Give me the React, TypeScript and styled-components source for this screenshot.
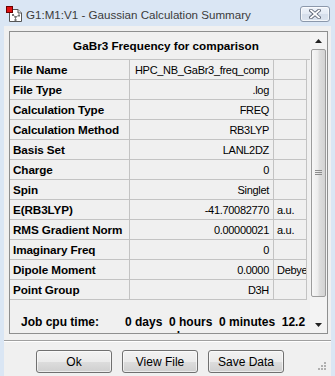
import React from "react";
import styled, { createGlobalStyle } from "styled-components";

const Global = createGlobalStyle`
  html, body { margin: 0; padding: 0; }
  body { width: 335px; height: 376px; overflow: hidden; background: #dae6f4; }
`;

const Window = styled.div`
  position: relative;
  width: 335px;
  height: 376px;
  background: #dae6f4;
  display: flex;
  flex-direction: column;
  overflow: hidden;
  font-family: "Liberation Sans", Arial, sans-serif;
  color: #000;
`;

const TitleBar = styled.div`
  height: 26px;
  flex: none;
  display: flex;
  align-items: flex-start;
  padding: 6px 5px 0 6px;
  box-sizing: border-box;
`;

const TitleText = styled.div`
  margin-left: 4px;
  margin-top: 1px;
  font-size: 11.6px;
  line-height: 15px;
  color: #3b3b3b;
  flex: 1;
  white-space: nowrap;
`;

const CloseButton = styled.div`
  width: 30px;
  height: 16px;
  box-sizing: border-box;
  border: 1px solid #8b98ab;
  border-radius: 3px;
  background: linear-gradient(#eef3fa 0%, #e3eaf4 50%, #d5deeb 51%, #dce4ef 100%);
  box-shadow: inset 0 0 0 1px rgba(255, 255, 255, 0.7);
  display: flex;
  align-items: center;
  justify-content: center;
`;

const Client = styled.div`
  position: relative;
  flex: 1;
  margin: 0 4px;
  background: #f0f0f0;
  display: flex;
  flex-direction: column;
`;

const Panel = styled.div`
  margin: 5px 3px 0 5px;
  height: 303px;
  box-sizing: border-box;
  border: 1px solid #8e8f8f;
  display: flex;
  overflow: hidden;
`;

const Content = styled.div`
  flex: 1;
  display: flex;
  flex-direction: column;
  overflow: hidden;
`;

const Header = styled.div`
  height: 27px;
  flex: none;
  width: 300px;
  border-bottom: 1px solid #c3c3c3;
  display: flex;
  align-items: center;
  justify-content: center;
  font-weight: bold;
  font-size: 11.7px;
  padding-left: 6px;
  box-sizing: content-box;
`;

const Row = styled.div`
  display: grid;
  grid-template-columns: 120px 144px 33px;
  height: 20px;
  flex: none;
`;

const Cell = styled.div<{ $kind: "label" | "value" | "unit" }>`
  height: 19px;
  border-right: 1px solid #c3c3c3;
  border-bottom: 1px solid #c3c3c3;
  display: flex;
  align-items: center;
  white-space: nowrap;
  overflow: hidden;
  ${(p) =>
    p.$kind === "label"
      ? `font-weight: bold; font-size: 11.7px; padding-left: 3px; letter-spacing: -0.1px;`
      : p.$kind === "value"
      ? `font-size: 11px; justify-content: flex-end; padding-right: 4px; letter-spacing: -0.3px;`
      : `font-size: 11px; padding-left: 3px; letter-spacing: -0.3px;`}
`;

const JobRow = styled.div`
  display: flex;
  padding: 15px 0 0 11px;
  font-weight: bold;
  font-size: 12px;
  line-height: 14px;
`;

const JobLabel = styled.div`
  width: 104px;
  flex: none;
`;

const JobValue = styled.div`
  width: 180px;
  white-space: pre-wrap;
  padding-left: 13px;
  text-indent: -13px;
`;

const ScrollBar = styled.div`
  width: 17px;
  flex: none;
  background: #f3f3f3;
  display: flex;
  flex-direction: column;
  align-items: center;
`;

const ArrowBox = styled.div`
  height: 17px;
  width: 17px;
  flex: none;
  display: flex;
  align-items: center;
  justify-content: center;
`;

const Thumb = styled.div`
  width: 15px;
  height: 248px;
  flex: none;
  box-sizing: border-box;
  border: 1px solid #9c9c9c;
  border-radius: 2px;
  background: linear-gradient(90deg, #f7f7f7 0%, #ececec 45%, #dedede 55%, #d3d3d3 100%);
  display: flex;
  align-items: center;
  justify-content: center;
`;

const Separator = styled.div`
  margin-top: 6px;
  height: 0;
  border-top: 1px solid #a0a0a0;
  border-bottom: 1px solid #ffffff;
`;

const ButtonRow = styled.div`
  display: flex;
  gap: 10px;
  padding: 8px 0 0 32px;
`;

const Button = styled.div`
  width: 76px;
  height: 23px;
  box-sizing: border-box;
  border: 1px solid #707070;
  border-radius: 3px;
  background: linear-gradient(#f2f2f2 0%, #ebebeb 50%, #dddddd 51%, #cfcfcf 100%);
  box-shadow: inset 0 0 0 1px rgba(255, 255, 255, 0.6);
  display: flex;
  align-items: center;
  justify-content: center;
  font-size: 12px;
  color: #000;
`;

const Grip = styled.svg`
  position: absolute;
  right: 5px;
  bottom: 6px;
`;

const rows: [string, string, string][] = [
  ["File Name", "HPC_NB_GaBr3_freq_comp", ""],
  ["File Type", ".log", ""],
  ["Calculation Type", "FREQ", ""],
  ["Calculation Method", "RB3LYP", ""],
  ["Basis Set", "LANL2DZ", ""],
  ["Charge", "0", ""],
  ["Spin", "Singlet", ""],
  ["E(RB3LYP)", "-41.70082770", "a.u."],
  ["RMS Gradient Norm", "0.00000021", "a.u."],
  ["Imaginary Freq", "0", ""],
  ["Dipole Moment", "0.0000", "Debye"],
  ["Point Group", "D3H", ""],
];

const AppIcon = () => (
  <svg width="16" height="16" viewBox="0 0 16 16">
    <path d="M3.5 3.5 H12 L15.5 7 V15.5 H3.5 Z" fill="#fff" stroke="#555" />
    <path d="M12 3.5 V7 H15.5" fill="#e8e8e8" stroke="#555" />
    <g stroke="#8a8a8a" strokeWidth="1">
      <line x1="7" y1="9" x2="9.5" y2="11" />
      <line x1="9.5" y1="11" x2="12.5" y2="9.5" />
      <line x1="9.5" y1="11" x2="9.5" y2="14" />
    </g>
    <g fill="#777">
      <rect x="6" y="8" width="2" height="2" />
      <rect x="8.5" y="10" width="2" height="2" />
      <rect x="12" y="8.5" width="2" height="2" />
      <rect x="8.5" y="13" width="2" height="2" />
    </g>
    <rect x="0.5" y="0.5" width="6" height="6" fill="#e01010" stroke="#6a0000" />
  </svg>
);

const CloseGlyph = () => (
  <svg width="12" height="10" viewBox="0 0 12 10">
    <path d="M2 1.5 L10 8.5 M10 1.5 L2 8.5" stroke="#5e6675" strokeWidth="3.6" strokeLinecap="square" />
    <path d="M2 1.5 L10 8.5 M10 1.5 L2 8.5" stroke="#ffffff" strokeWidth="1.8" strokeLinecap="square" />
  </svg>
);

export default function App() {
  return (
    <>
      <Global />
      <Window>
        <TitleBar>
          <AppIcon />
          <TitleText>G1:M1:V1 - Gaussian Calculation Summary</TitleText>
          <CloseButton>
            <CloseGlyph />
          </CloseButton>
        </TitleBar>
        <Client>
          <Panel>
            <Content>
              <Header>GaBr3 Frequency for comparison</Header>
              {rows.map(([label, value, unit]) => (
                <Row key={label}>
                  <Cell $kind="label">{label}</Cell>
                  <Cell $kind="value">{value}</Cell>
                  <Cell $kind="unit">{unit}</Cell>
                </Row>
              ))}
              <JobRow>
                <JobLabel>Job cpu time:</JobLabel>
                <JobValue>{"0 days  0 hours  0 minutes  12.2 seconds"}</JobValue>
              </JobRow>
            </Content>
            <ScrollBar>
              <ArrowBox>
                <svg width="7" height="4" viewBox="0 0 7 4">
                  <path d="M3.5 0 L7 4 H0 Z" fill="#222" />
                </svg>
              </ArrowBox>
              <Thumb>
                <svg width="7" height="6" viewBox="0 0 7 6">
                  <g stroke="#8d8d8d">
                    <line x1="0" y1="0.5" x2="7" y2="0.5" />
                    <line x1="0" y1="2.5" x2="7" y2="2.5" />
                    <line x1="0" y1="4.5" x2="7" y2="4.5" />
                  </g>
                </svg>
              </Thumb>
              <div style={{ flex: 1 }} />
              <ArrowBox>
                <svg width="7" height="4" viewBox="0 0 7 4">
                  <path d="M0 0 H7 L3.5 4 Z" fill="#222" />
                </svg>
              </ArrowBox>
            </ScrollBar>
          </Panel>
          <Separator />
          <ButtonRow>
            <Button>Ok</Button>
            <Button>View File</Button>
            <Button>Save Data</Button>
          </ButtonRow>
          <Grip width="9" height="9" viewBox="0 0 9 9">
            <g fill="#b0b0b0">
              <rect x="7" y="1" width="2" height="2" />
              <rect x="4" y="4" width="2" height="2" />
              <rect x="7" y="4" width="2" height="2" />
              <rect x="1" y="7" width="2" height="2" />
              <rect x="4" y="7" width="2" height="2" />
              <rect x="7" y="7" width="2" height="2" />
            </g>
          </Grip>
        </Client>
      </Window>
    </>
  );
}
